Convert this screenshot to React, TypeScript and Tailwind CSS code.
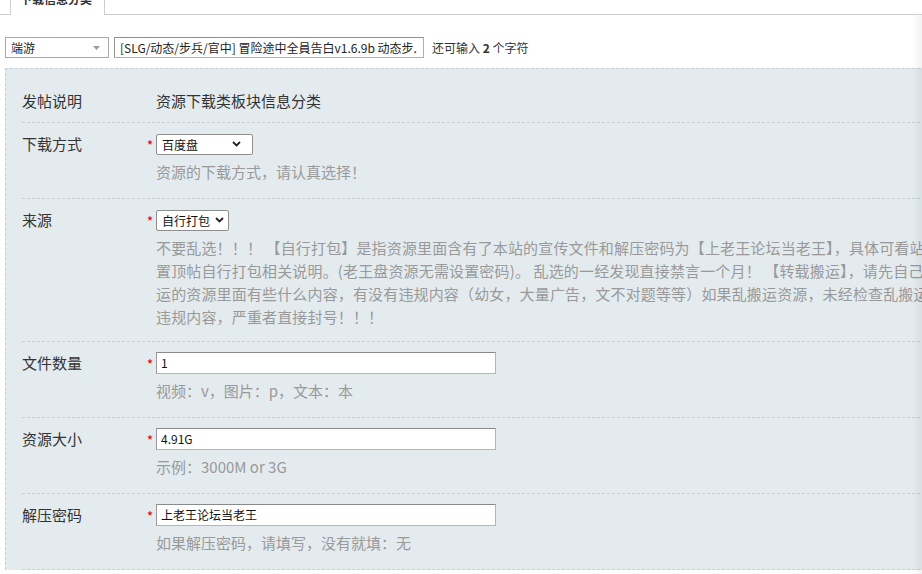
import React from 'react';

const FONT = '"Noto Sans CJK SC", "Microsoft YaHei", "Liberation Sans", sans-serif';

const Chevron = () => (
    <svg width="9" height="6" viewBox="0 0 9 6" className="shrink-0">
        <path d="M1 1 L4.5 4.5 L8 1" fill="none" stroke="#222" strokeWidth="1.8" />
    </svg>
);

const FakeSelect: React.FC<{ value: string; width: string; pr: string }> = ({ value, width, pr }) => (
    <div className={`${width} ${pr} h-[21px] flex items-center justify-between pl-[5px] bg-white border border-[#8f8f8f] rounded-[2px] text-[12px] text-[#111]`}>
        <span className="leading-[19px] whitespace-nowrap">{value}</span>
        <Chevron />
    </div>
);

const TextBox: React.FC<{ value: string }> = ({ value }) => (
    <div className="w-[340px] h-[22px] flex items-center px-[4px] bg-white border border-[#b5b5b5] border-t-[#8a8a8a] border-l-[#9a9a9a] text-[12px] text-[#111]">
        <span className="leading-[20px] whitespace-nowrap">{value}</span>
    </div>
);

const Star = () => (
    <span className="w-[12px] text-[14px] leading-[14px] text-[#e40000] self-start mt-[5px] text-center">*</span>
);

const Hint: React.FC<{ children: React.ReactNode }> = ({ children }) => (
    <div className="mt-[6px] text-[15px] leading-[22px] text-[#999] whitespace-nowrap">{children}</div>
);

interface FieldProps {
    label: string;
    control: React.ReactNode;
    children?: React.ReactNode;
}

const Field: React.FC<FieldProps> = ({ label, control, children }) => (
    <div className="flex pt-[10px] pb-[15px] border-b border-dashed border-[#c4cfd6]">
        <div className="w-[134px] h-[22px] flex items-center text-[15px] text-[#333]">{label}</div>
        <div className="flex flex-col">
            <div className="flex items-center h-[22px] -ml-[12px]">
                <Star />
                {control}
            </div>
            {children}
        </div>
    </div>
);

const NOTICE = [
    '不要乱选！！！ 【自行打包】是指资源里面含有了本站的宣传文件和解压密码为【上老王论坛当老王】，具体可看站',
    '置顶帖自行打包相关说明。(老王盘资源无需设置密码)。 乱选的一经发现直接禁言一个月！ 【转载搬运】，请先自己',
    '运的资源里面有些什么内容，有没有违规内容（幼女，大量广告，文不对题等等）如果乱搬运资源，未经检查乱搬运',
    '违规内容，严重者直接封号！！！',
];

export default function App() {
    return (
        <div className="relative w-[922px] h-[574px] overflow-hidden bg-white" style={{ fontFamily: FONT }}>
            {/* tab strip */}
            <div className="flex h-[15px]">
                <div className="w-[10px] border-b border-[#cfcfcf]" />
                <div className="w-[95px] border-l border-r border-[#cfcfcf] bg-white">
                    <div className="-mt-[7px] pl-[9px] text-[12px] leading-[12px] font-bold text-[#333] whitespace-nowrap">下载信息分类</div>
                </div>
                <div className="flex-1 border-b border-[#cfcfcf]" />
            </div>

            {/* type + title row */}
            <div className="flex items-center mt-[22px] pl-[5px] h-[21px] text-[12px]">
                <div className="w-[104px] h-[21px] flex items-center justify-between pl-[5px] pr-[8px] border border-[#a9a9a9] text-[#222]">
                    <span className="leading-[19px]">端游</span>
                    <svg width="7" height="4" viewBox="0 0 7 4"><path d="M0 0 H7 L3.5 4 Z" fill="#9a9a9a" /></svg>
                </div>
                <div className="ml-[5px] w-[310px] h-[21px] flex items-center pl-[5px] border border-[#b0b0b0] border-t-[#8f8f8f] border-l-[#969696] overflow-hidden text-[#222]">
                    <span className="leading-[19px] whitespace-nowrap">[SLG/动态/步兵/官中] 冒险途中全員告白v1.6.9b 动态步.</span>
                </div>
                <span className="ml-[8px] text-[#333] whitespace-nowrap">还可输入 <b>2</b> 个字符</span>
            </div>

            {/* form panel */}
            <div className="mt-[10px] ml-[5px] w-[1100px] pl-[16px] pt-[11px] bg-[#e4ebef] border-t border-l border-dashed border-[#c4cfd6]">
                <div className="flex pt-[10px] pb-[10px] border-b border-dashed border-[#c4cfd6] text-[15px] text-[#333] leading-[22px]">
                    <div className="w-[134px]">发帖说明</div>
                    <div>资源下载类板块信息分类</div>
                </div>

                <Field label="下载方式" control={<FakeSelect value="百度盘" width="w-[97px]" pr="pr-[11px]" />}>
                    <Hint>资源的下载方式，请认真选择！</Hint>
                </Field>

                <div className="flex pt-[10px] pb-[13px] border-b border-dashed border-[#c4cfd6]">
                    <div className="w-[134px] h-[22px] flex items-center text-[15px] text-[#333]">来源</div>
                    <div className="flex flex-col">
                        <div className="flex items-center h-[22px] -ml-[12px]">
                            <Star />
                            <FakeSelect value="自行打包" width="w-[73px]" pr="pr-[4px]" />
                        </div>
                        <div className="mt-[5px] text-[15px] leading-[23px] tracking-[0.15px] text-[#999]">
                            {NOTICE.map((line, i) => (
                                <div key={i} className="whitespace-nowrap">{line}</div>
                            ))}
                        </div>
                    </div>
                </div>

                <Field label="文件数量" control={<TextBox value="1" />}>
                    <Hint>视频：v，图片：p，文本：本</Hint>
                </Field>

                <Field label="资源大小" control={<TextBox value="4.91G" />}>
                    <Hint>示例：3000M or 3G</Hint>
                </Field>

                <Field label="解压密码" control={<TextBox value="上老王论坛当老王" />}>
                    <Hint>如果解压密码，请填写，没有就填：无</Hint>
                </Field>
            </div>

            {/* soft right edge */}
            <div className="absolute right-0 top-[15px] bottom-0 w-[10px] bg-linear-to-r from-transparent to-[rgba(0,0,0,0.05)] pointer-events-none" />
        </div>
    );
}
